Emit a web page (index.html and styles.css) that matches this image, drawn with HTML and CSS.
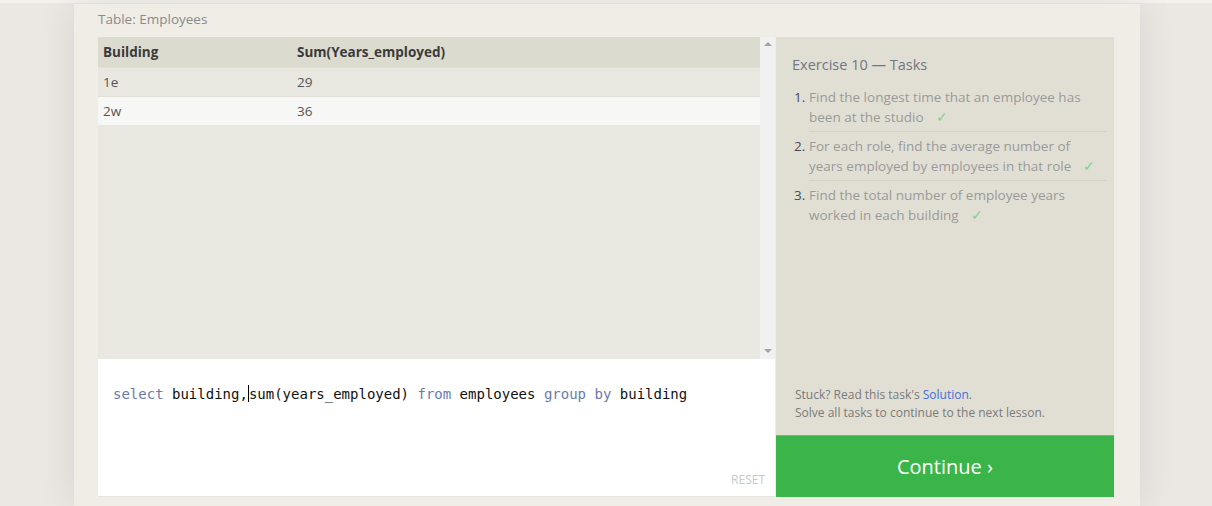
FILE: index.html
```html
<!DOCTYPE html>
<html>
<head>
<meta charset="utf-8">
<link rel="stylesheet" href="styles.css">
</head>
<body>
<div class="page">
  <div class="main">
    <div class="caption">Table: Employees</div>
    <div class="workspace">
      <div class="left">
        <div class="results">
          <div class="table-wrap">
            <table class="grid">
              <thead>
                <tr><th class="c1">Building</th><th>Sum(Years_employed)</th></tr>
              </thead>
              <tbody>
                <tr class="odd"><td class="c1">1e</td><td>29</td></tr>
                <tr class="even"><td class="c1">2w</td><td>36</td></tr>
              </tbody>
            </table>
          </div>
          <div class="scrollbar">
            <span class="arrow up"></span>
            <span class="arrow down"></span>
          </div>
        </div>
        <div class="editor">
          <div class="code"><span class="kw">select</span> building,<span class="cursor"></span>sum(years_employed) <span class="kw">from</span> employees <span class="kw">group</span> <span class="kw">by</span> building</div>
          <div class="reset">RESET</div>
        </div>
      </div>
      <div class="right">
        <div class="tasks">
          <div class="tasks-title">Exercise 10 — Tasks</div>
          <ol class="task-list">
            <li><span class="num">1.</span><div class="txt">Find the longest time that an employee has been at the studio<span class="check">✓</span></div></li>
            <li><span class="num">2.</span><div class="txt">For each role, find the average number of years employed by employees in that role<span class="check">✓</span></div></li>
            <li><span class="num">3.</span><div class="txt">Find the total number of employee years worked in each building<span class="check">✓</span></div></li>
          </ol>
          <div class="help">
            <div>Stuck? Read this task's <a class="link">Solution</a>.</div>
            <div>Solve all tasks to continue to the next lesson.</div>
          </div>
        </div>
        <div class="continue">Continue ›</div>
      </div>
    </div>
  </div>
</div>
</body>
</html>
```
FILE: styles.css
```css
* { box-sizing: border-box; }
html, body { margin: 0; padding: 0; }
body {
  background: #ebe7e3;
  font-family: "Open Sans", "Noto Sans", sans-serif;
  width: 1212px;
  height: 506px;
  overflow: hidden;
}
.page {
  border-top: 3px solid #f4f2ef;
  height: 506px;
}
.main {
  margin-left: 74px;
  width: 1066px;
  height: 503px;
  background: #f0ede6;
  border-top: 1px solid #e2dfda;
  padding: 0 26px 0 24px;
  box-shadow: 0 0 36px rgba(0,0,0,0.09);
}
.caption {
  height: 33px;
  padding-top: 6px;
  font-size: 13.5px;
  color: #8a8a8a;
}
.workspace {
  display: flex;
  gap: 1px;
  height: 460px;
}
.left {
  width: 677px;
  display: flex;
  flex-direction: column;
}
.results {
  height: 322px;
  display: flex;
  background: #e9e8e0;
}
.table-wrap { flex: 1; }
.grid {
  width: 100%;
  border-collapse: collapse;
  font-size: 13.5px;
}
.grid th {
  text-align: left;
  font-weight: 700;
  color: #3a3a3a;
  background: #dcdbd0;
  height: 30px;
  padding: 0 5px;
}
.grid td {
  height: 29px;
  padding: 0 5px;
  color: #555;
  border-top: 1px solid #e0dfd8;
}
.grid .c1 { width: 194px; }
.grid tr.odd td { background: #e9e8e0; }
.grid tr.even td { background: #f7f7f5; }
.scrollbar {
  width: 15px;
  background: #f1f1f1;
  display: flex;
  flex-direction: column;
  justify-content: space-between;
  align-items: center;
  padding: 5px 0 6px;
}
.arrow {
  width: 0;
  height: 0;
  border-left: 4px solid transparent;
  border-right: 4px solid transparent;
}
.arrow.up { border-bottom: 4px solid #a3a3a3; }
.arrow.down { border-top: 4px solid #a3a3a3; }
.editor {
  height: 138px;
  background: #fff;
  border-bottom: 1px solid #e6e4de;
  display: flex;
  flex-direction: column;
  justify-content: space-between;
  padding: 26px 10px 8px 15px;
}
.code {
  font-family: "DejaVu Sans Mono", "Liberation Mono", monospace;
  font-size: 14px;
  color: #111;
  white-space: pre;
  line-height: 18px;
}
.kw { color: #6a7bad; }
.cursor {
  display: inline-block;
  width: 0;
  height: 17px;
  border-left: 1px solid #000;
  vertical-align: -3px;
}
.reset {
  align-self: flex-end;
  font-size: 12px;
  color: #c8c8c8;
}
.right {
  width: 338px;
  display: flex;
  flex-direction: column;
}
.tasks {
  height: 398px;
  background: #e1dfd4;
  padding: 18px 7px 0 16px;
  display: flex;
  flex-direction: column;
}
.tasks-title {
  font-size: 14.5px;
  color: #707685;
  margin-bottom: 9px;
}
.task-list {
  list-style: none;
  margin: 0;
  padding: 0;
  flex: 1;
}
.task-list li {
  display: flex;
  font-size: 13.5px;
  line-height: 20px;
  padding: 4px 0 4px;
}
.num {
  width: 17px;
  padding-left: 2px;
  color: #3e4a63;
  flex: none;
}
.txt {
  color: #9a9a9a;
  flex: 1;
  padding-bottom: 4px;
  margin-bottom: -4px;
  border-bottom: 1px solid #d4d2c6;
}
.task-list li:last-child .txt { border-bottom: none; }
.check {
  display: inline-block;
  line-height: 14px;
  color: #7fcf8b;
  margin-left: 12px;
}
.help {
  font-size: 12px;
  line-height: 18px;
  color: #7a7a7a;
  padding-bottom: 13px;
  padding-left: 3px;
}
.link { color: #3e70d8; }
.continue {
  height: 62px;
  background: #3bb54a;
  border-top: 1px solid #5cc46a;
  color: #fff;
  font-size: 20px;
  display: flex;
  align-items: center;
  justify-content: center;
}
```
